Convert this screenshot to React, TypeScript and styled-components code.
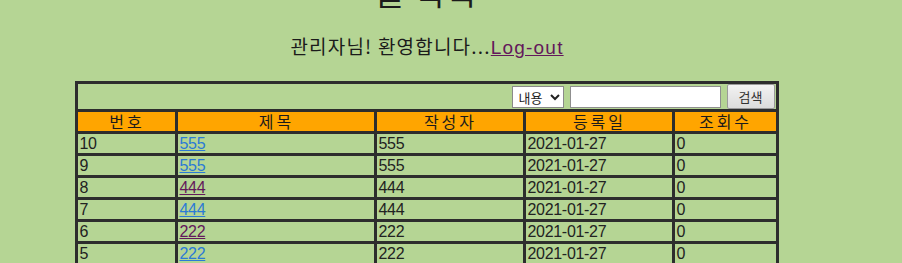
import React from "react";
import styled, { createGlobalStyle } from "styled-components";

const GlobalStyle = createGlobalStyle`
  html, body {
    margin: 0;
    padding: 0;
    background: #b5d594;
    overflow: hidden;
  }
  body {
    font-family: "Liberation Sans", "Noto Sans CJK KR", sans-serif;
    color: #1b1b1b;
  }
`;

const Page = styled.div`
  width: 854px;
  text-align: center;
`;

const Title = styled.h1`
  margin: -25px 0 0;
  font-family: "Noto Sans CJK KR", sans-serif;
  font-size: 32px;
  font-weight: 400;
  line-height: 32px;
  letter-spacing: 2px;
`;

const Welcome = styled.p`
  margin: 27px 0 0;
  font-family: "Noto Sans CJK KR", "Liberation Sans", sans-serif;
  font-size: 19px;
  line-height: 24px;
  letter-spacing: 1.2px;
`;

const Link = styled.a<{ $visited?: boolean }>`
  color: ${(p) => (p.$visited ? "#63185b" : "#2b7ad6")};
  text-decoration: underline;
  font-family: "Liberation Sans", sans-serif;
`;

const Board = styled.table`
  margin: 21px auto 0;
  width: 700px;
  border-collapse: collapse;
  border: 3px solid #2d2d2d;
  table-layout: fixed;
  font-size: 16px;
  text-align: left;
`;

const Col = styled.col<{ $w: number }>`
  width: ${(p) => p.$w}px;
`;

const SearchCell = styled.td`
  border: 3px solid #2d2d2d;
  height: 24px;
  padding: 0 1px 0 0;
  text-align: right;
  vertical-align: middle;
`;

const SearchBar = styled.div`
  display: flex;
  justify-content: flex-end;
  align-items: center;
  gap: 6px;
`;

const Select = styled.select`
  width: 52px;
  height: 22px;
  font-family: "Noto Sans CJK KR", sans-serif;
  font-size: 13px;
  border: 1px solid #8a8a8a;
  border-radius: 0;
  background: #fff;
  color: #222;
  padding: 0 0 0 2px;
`;

const SearchInput = styled.input`
  width: 147px;
  height: 18px;
  border: 1px solid #8f8f8f;
  padding: 1px;
  background: #fff;
`;

const SearchButton = styled.button`
  width: 48px;
  height: 25px;
  font-family: "Noto Sans CJK KR", sans-serif;
  font-size: 13px;
  color: #333;
  background: linear-gradient(#f2f2f2, #dcdcdc);
  border: 1px solid #9a9a9a;
  border-radius: 2px;
  padding: 0;
`;

const HeadCell = styled.th`
  background: #ffa500;
  border: 3px solid #2d2d2d;
  font-family: "Noto Sans CJK KR", sans-serif;
  font-weight: 400;
  font-size: 16px;
  line-height: 19px;
  letter-spacing: 3px;
  text-align: center;
  padding: 0;
`;

const Cell = styled.td`
  border: 3px solid #2d2d2d;
  padding: 0 1px;
  line-height: 19px;
  font-size: 16px;
  color: #222;
  letter-spacing: -0.3px;
`;

const rows = [
  { no: 10, title: "555", writer: "555", visited: false },
  { no: 9, title: "555", writer: "555", visited: false },
  { no: 8, title: "444", writer: "444", visited: true },
  { no: 7, title: "444", writer: "444", visited: false },
  { no: 6, title: "222", writer: "222", visited: true },
  { no: 5, title: "222", writer: "222", visited: false },
];

const heads = [
  { label: "번호", w: 100 },
  { label: "제목", w: 199 },
  { label: "작성자", w: 149 },
  { label: "등록일", w: 149 },
  { label: "조회수", w: 103 },
];

export default function App() {
  return (
    <>
      <GlobalStyle />
      <Page>
        <Title>글 목록</Title>
        <Welcome>
          관리자님! 환영합니다...<Link href="#" $visited>Log-out</Link>
        </Welcome>
        <Board>
          <colgroup>
            {heads.map((h) => (
              <Col key={h.label} $w={h.w} />
            ))}
          </colgroup>
          <tbody>
            <tr>
              <SearchCell colSpan={5}>
                <SearchBar>
                  <Select defaultValue="content">
                    <option value="content">내용</option>
                    <option value="title">제목</option>
                  </Select>
                  <SearchInput type="text" />
                  <SearchButton type="button">검색</SearchButton>
                </SearchBar>
              </SearchCell>
            </tr>
            <tr>
              {heads.map((h) => (
                <HeadCell key={h.label}>{h.label}</HeadCell>
              ))}
            </tr>
            {rows.map((r) => (
              <tr key={r.no}>
                <Cell>{r.no}</Cell>
                <Cell>
                  <Link href="#" $visited={r.visited}>
                    {r.title}
                  </Link>
                </Cell>
                <Cell>{r.writer}</Cell>
                <Cell>2021-01-27</Cell>
                <Cell>0</Cell>
              </tr>
            ))}
          </tbody>
        </Board>
      </Page>
    </>
  );
}
